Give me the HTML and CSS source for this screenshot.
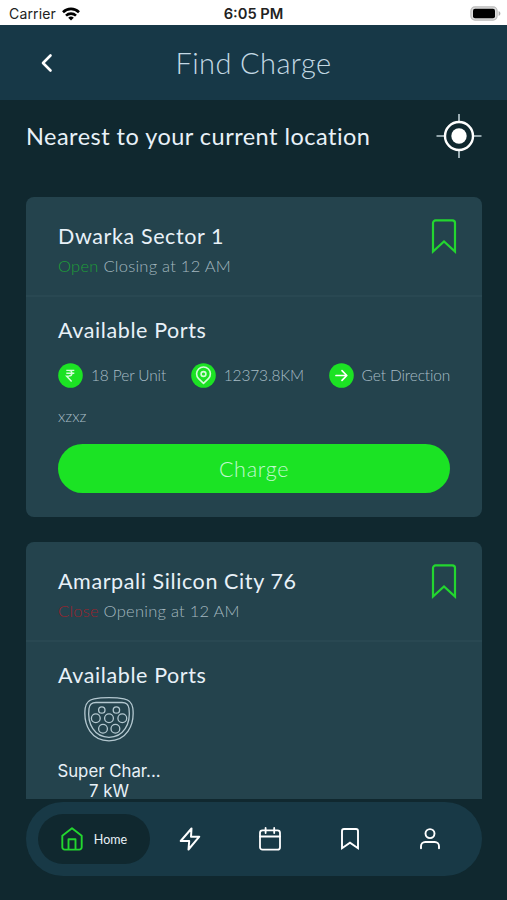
FILE: index.html
```html
<!DOCTYPE html>
<html lang="en">
<head>
    <meta charset="UTF-8">
    <meta name="viewport" content="width=device-width, initial-scale=1.0">
    <title>Find Charge</title>
    <link rel="stylesheet" href="styles.css">
</head>
<body>
    <div class="screen">
        <div class="status-bar">
            <div class="carrier">
                <span>Carrier</span>
                <svg width="18" height="14" viewBox="0 0 18 14" fill="none" stroke="#000" stroke-width="2.6">
                    <path d="M1 5.2a11.4 11.4 0 0 1 16 0"/>
                    <path d="M4 8.6a7.2 7.2 0 0 1 10 0"/>
                    <path d="M9 13.6L6.2 10.8a4 4 0 0 1 5.6 0z" fill="#000" stroke="none"/>
                </svg>
            </div>
            <span class="time">6:05 PM</span>
            <svg class="battery" width="31" height="15" viewBox="0 0 31 15">
                <rect x="0.9" y="0.9" width="26.2" height="13.2" rx="4" fill="#ddd" stroke="#bbb" stroke-width="1.2"/>
                <rect x="3" y="2.8" width="22" height="9.4" rx="2" fill="#000"/>
                <path d="M28.6 5v5c1-.4 1.8-1.3 1.8-2.5s-.8-2.1-1.8-2.5z" fill="#aaa"/>
            </svg>
        </div>

        <header class="header">
            <svg class="back" width="14" height="20" viewBox="0 0 14 20" fill="none" stroke="#fff" stroke-width="2.6" stroke-linecap="round" stroke-linejoin="round">
                <path d="M10.5 2.5L3 10l7.5 7.5"/>
            </svg>
            <h1>Find Charge</h1>
        </header>

        <div class="location">
            <h2>Nearest to your current location</h2>
            <svg width="46" height="46" viewBox="0 0 46 46" fill="none" stroke="#fff">
                <path d="M23 1v8M23 37v8M.5 23h8M37 23h8.5" stroke="#bccdd3" stroke-width="1.6"/>
                <circle cx="23" cy="23" r="14" stroke-width="2.4"/>
                <circle cx="23" cy="23" r="7.7" fill="#fff" stroke="none"/>
            </svg>
        </div>

        <main class="stations">
            <section class="card">
                <div class="card-head">
                    <div>
                        <h3>Dwarka Sector 1</h3>
                        <p class="hours"><span class="open">Open</span> Closing at 12 AM</p>
                    </div>
                    <svg width="26" height="35" viewBox="0 0 26 35" fill="none" stroke="#23d62f" stroke-width="2.2">
                        <path d="M2 32.5V4a2.6 2.6 0 0 1 2.6-2.6h16.8A2.6 2.6 0 0 1 24 4v28.5L13 22.5z"/>
                    </svg>
                </div>
                <div class="card-body">
                    <h3>Available Ports</h3>
                    <div class="facts">
                        <span class="fact">
                            <svg width="25" height="25" viewBox="0 0 25 25" fill="none" stroke="#d5fbd9" stroke-width="1.4">
                                <circle cx="12.5" cy="12.5" r="12.3" fill="#1ce224" stroke="none"/>
                                <path d="M8.3 7.4h8M8.3 10.3h8M8.3 7.4h2.4c4.3 0 4.3 5.7 0 5.7H8.6l5 5.4"/>
                            </svg>
                            <span>18 Per Unit</span>
                        </span>
                        <span class="fact">
                            <svg width="25" height="25" viewBox="0 0 25 25" fill="none" stroke="#d5fbd9" stroke-width="1.6">
                                <circle cx="12.5" cy="12.5" r="12.3" fill="#1ce224" stroke="none"/>
                                <path d="M12.5 20.3l-4.9-4.6a6.9 6.9 0 1 1 9.8 0z" stroke-linejoin="round"/>
                                <circle cx="12.5" cy="11" r="2.4"/>
                            </svg>
                            <span>12373.8KM</span>
                        </span>
                        <span class="fact">
                            <svg width="25" height="25" viewBox="0 0 25 25" fill="none" stroke="#fff" stroke-width="1.7">
                                <circle cx="12.5" cy="12.5" r="12.3" fill="#1ce224" stroke="none"/>
                                <path d="M7 12.5h10.5M13 7.7l4.8 4.8-4.8 4.8" stroke-linecap="round" stroke-linejoin="round"/>
                            </svg>
                            <span>Get Direction</span>
                        </span>
                    </div>
                    <p class="note">xzxz</p>
                    <button class="charge">Charge</button>
                </div>
            </section>

            <section class="card">
                <div class="card-head">
                    <div>
                        <h3>Amarpali Silicon City 76</h3>
                        <p class="hours"><span class="close">Close</span> Opening at 12 AM</p>
                    </div>
                    <svg width="26" height="35" viewBox="0 0 26 35" fill="none" stroke="#23d62f" stroke-width="2.2">
                        <path d="M2 32.5V4a2.6 2.6 0 0 1 2.6-2.6h16.8A2.6 2.6 0 0 1 24 4v28.5L13 22.5z"/>
                    </svg>
                </div>
                <div class="card-body last">
                    <h3>Available Ports</h3>
                    <div class="port">
                        <svg width="50" height="45" viewBox="0 0 50 45" fill="none" stroke="#b4c8d0" stroke-width="1.3">
                            <path d="M10 1.8C18 .3 32 .3 40 1.8c5.5 1 8 3.5 8.8 9.2C51 29 42 43.8 25 43.8S-1 29 1.2 11C2 5.3 4.5 2.8 10 1.8z"/>
                            <path d="M12 5.5h26c4 0 6.5 1.8 7 6C47 27 39.5 40.3 25 40.3S3 27 5 11.5c.5-4.2 3-6 7-6z"/>
                            <circle cx="17.8" cy="13" r="3.2"/>
                            <circle cx="32.4" cy="13" r="3.2"/>
                            <circle cx="11.8" cy="21.3" r="4.4"/>
                            <circle cx="25" cy="21.3" r="4.4"/>
                            <circle cx="38.3" cy="21.3" r="4.4"/>
                            <circle cx="19" cy="31.8" r="4.4"/>
                            <circle cx="31.4" cy="31.8" r="4.4"/>
                        </svg>
                        <span>Super Char...</span>
                        <span>7 kW</span>
                    </div>
                </div>
            </section>
        </main>

        <nav class="tabs">
            <a class="tab active">
                <svg width="22" height="24" viewBox="0 0 22 24" fill="none" stroke="#23d62f" stroke-width="1.9" stroke-linejoin="round">
                    <path d="M1.3 8.8L11 1.3l9.7 7.5v11.4a2.4 2.4 0 0 1-2.4 2.4H3.7a2.4 2.4 0 0 1-2.4-2.4z"/>
                    <path d="M7.5 22.5V12.3h7v10.2"/>
                </svg>
                <span>Home</span>
            </a>
            <a class="tab">
                <svg width="22" height="24" viewBox="0 0 22 24" fill="none" stroke="#fff" stroke-width="2" stroke-linejoin="round">
                    <path d="M12.5 1.5L1.7 14h8.5l-.7 8.5L20.3 9.7H12z"/>
                </svg>
            </a>
            <a class="tab">
                <svg width="22" height="24" viewBox="0 0 22 24" fill="none" stroke="#fff" stroke-width="1.8">
                    <rect x="1" y="3.3" width="20" height="19.4" rx="2.5"/>
                    <path d="M6.6 1v5M15.2 1v5M1 9.5h20" stroke-linecap="round"/>
                </svg>
            </a>
            <a class="tab">
                <svg width="22" height="24" viewBox="0 0 22 24" fill="none" stroke="#fff" stroke-width="1.9">
                    <path d="M3 21.2V4a2 2 0 0 1 2-2h12a2 2 0 0 1 2 2v17.2l-8-5.6z"/>
                </svg>
            </a>
            <a class="tab">
                <svg width="22" height="24" viewBox="0 0 22 24" fill="none" stroke="#fff" stroke-width="1.9" stroke-linecap="round">
                    <circle cx="11" cy="6.6" r="4.5"/>
                    <path d="M2 21.3v-2.1a4.2 4.2 0 0 1 4.2-4.2h9.600a4.2 4.2 0 0 1 4.2 4.2v2.1"/>
                </svg>
            </a>
        </nav>
    </div>
</body>
</html>
```
FILE: styles.css
```css
* {
    margin: 0;
    padding: 0;
    box-sizing: border-box;
}

body {
    font-family: Lato, sans-serif;
    color: #e8f1f8;
    background-color: #10282f;
}

.screen {
    display: flex;
    flex-direction: column;
    height: 900px;
    overflow: hidden;
}

svg {
    display: block;
    flex-shrink: 0;
}

.status-bar {
    display: grid;
    grid-template-columns: 1fr auto 1fr;
    align-items: center;
    height: 25px;
    padding: 2px 6px 0 9px;
    background-color: #fff;
    color: #222;
    font-family: Inter, sans-serif;
    font-size: 14px;
}

.carrier {
    display: flex;
    align-items: center;
    gap: 6px;
    letter-spacing: 0.15px;
}

.time {
    font-weight: 600;
    font-size: 14.7px;
    margin-right: 3px;
}

.battery {
    justify-self: end;
}

.header {
    display: grid;
    grid-template-columns: 60px 1fr 60px;
    align-items: center;
    height: 75px;
    background-color: #173847;
}

.back {
    margin-left: 40px;
}

.header h1 {
    font-size: 29px;
    font-weight: 300;
    line-height: 40px;
    letter-spacing: 0.4px;
    text-align: center;
    color: #c3d9e4;
}

.location {
    display: flex;
    justify-content: space-between;
    align-items: center;
    height: 72px;
    margin-bottom: 25px;
    padding: 0 25px 0 26px;
}

.location h2 {
    font-size: 23.5px;
    font-weight: 400;
    letter-spacing: 0.48px;
}

.stations {
    display: flex;
    flex-direction: column;
    gap: 25px;
    height: 602px;
    padding: 0 25px 0 26px;
    overflow: hidden;
}

.card {
    flex-shrink: 0;
    border-radius: 8px;
    background-color: #24434d;
}

.card-head {
    display: flex;
    justify-content: space-between;
    height: 100px;
    padding: 22px 25px 0 32px;
    border-bottom: 2px solid #294852;
}

.card h3 {
    margin-top: -1px;
    font-size: 21.5px;
    font-weight: 400;
    line-height: 36px;
    letter-spacing: 0.6px;
}

.hours {
    font-size: 16.5px;
    font-weight: 300;
    line-height: 24px;
    letter-spacing: 0.25px;
    color: #a3b7bf;
}

.open {
    color: #1e9f38;
}

.close {
    color: #9b232d;
}

.card-body {
    padding: 16px 32px 24px;
}

.facts {
    display: flex;
    align-items: center;
    gap: 24.5px;
    height: 25px;
    margin-top: 15px;
}

.fact {
    display: flex;
    align-items: center;
    gap: 8px;
    font-size: 15.5px;
    font-weight: 300;
    font-variant-ligatures: none;
    letter-spacing: -0.12px;
    white-space: nowrap;
    color: #a8bdc6;
}

.fact span {
    margin-top: -2px;
}

.note {
    margin-top: 16px;
    font-size: 15.5px;
    font-weight: 300;
    line-height: 24px;
    color: #a8bdc6;
}

.charge {
    display: block;
    width: 100%;
    height: 49px;
    margin-top: 16px;
    border: none;
    border-radius: 25px;
    background-color: #1be324;
    color: #c1fad0;
    font-family: inherit;
    font-size: 21.5px;
    font-weight: 300;
    letter-spacing: 0.7px;
}

.port {
    display: flex;
    flex-direction: column;
    align-items: center;
    gap: 6.5px;
    width: 102px;
    margin-top: 4px;
    font-family: Inter, sans-serif;
    font-size: 16.8px;
    line-height: 14px;
    white-space: nowrap;
}

.port svg {
    margin-bottom: 15px;
}

.tabs {
    display: flex;
    align-items: center;
    height: 74px;
    margin: 3px 25px 0 26px;
    padding: 0 12px;
    border-radius: 37px;
    background-color: #183946;
}

.tab {
    display: flex;
    align-items: center;
    justify-content: center;
    width: 80px;
}

.active {
    gap: 11px;
    width: 112px;
    height: 50px;
    border-radius: 25px;
    background-color: #10282f;
    font-size: 12.5px;
}
```
